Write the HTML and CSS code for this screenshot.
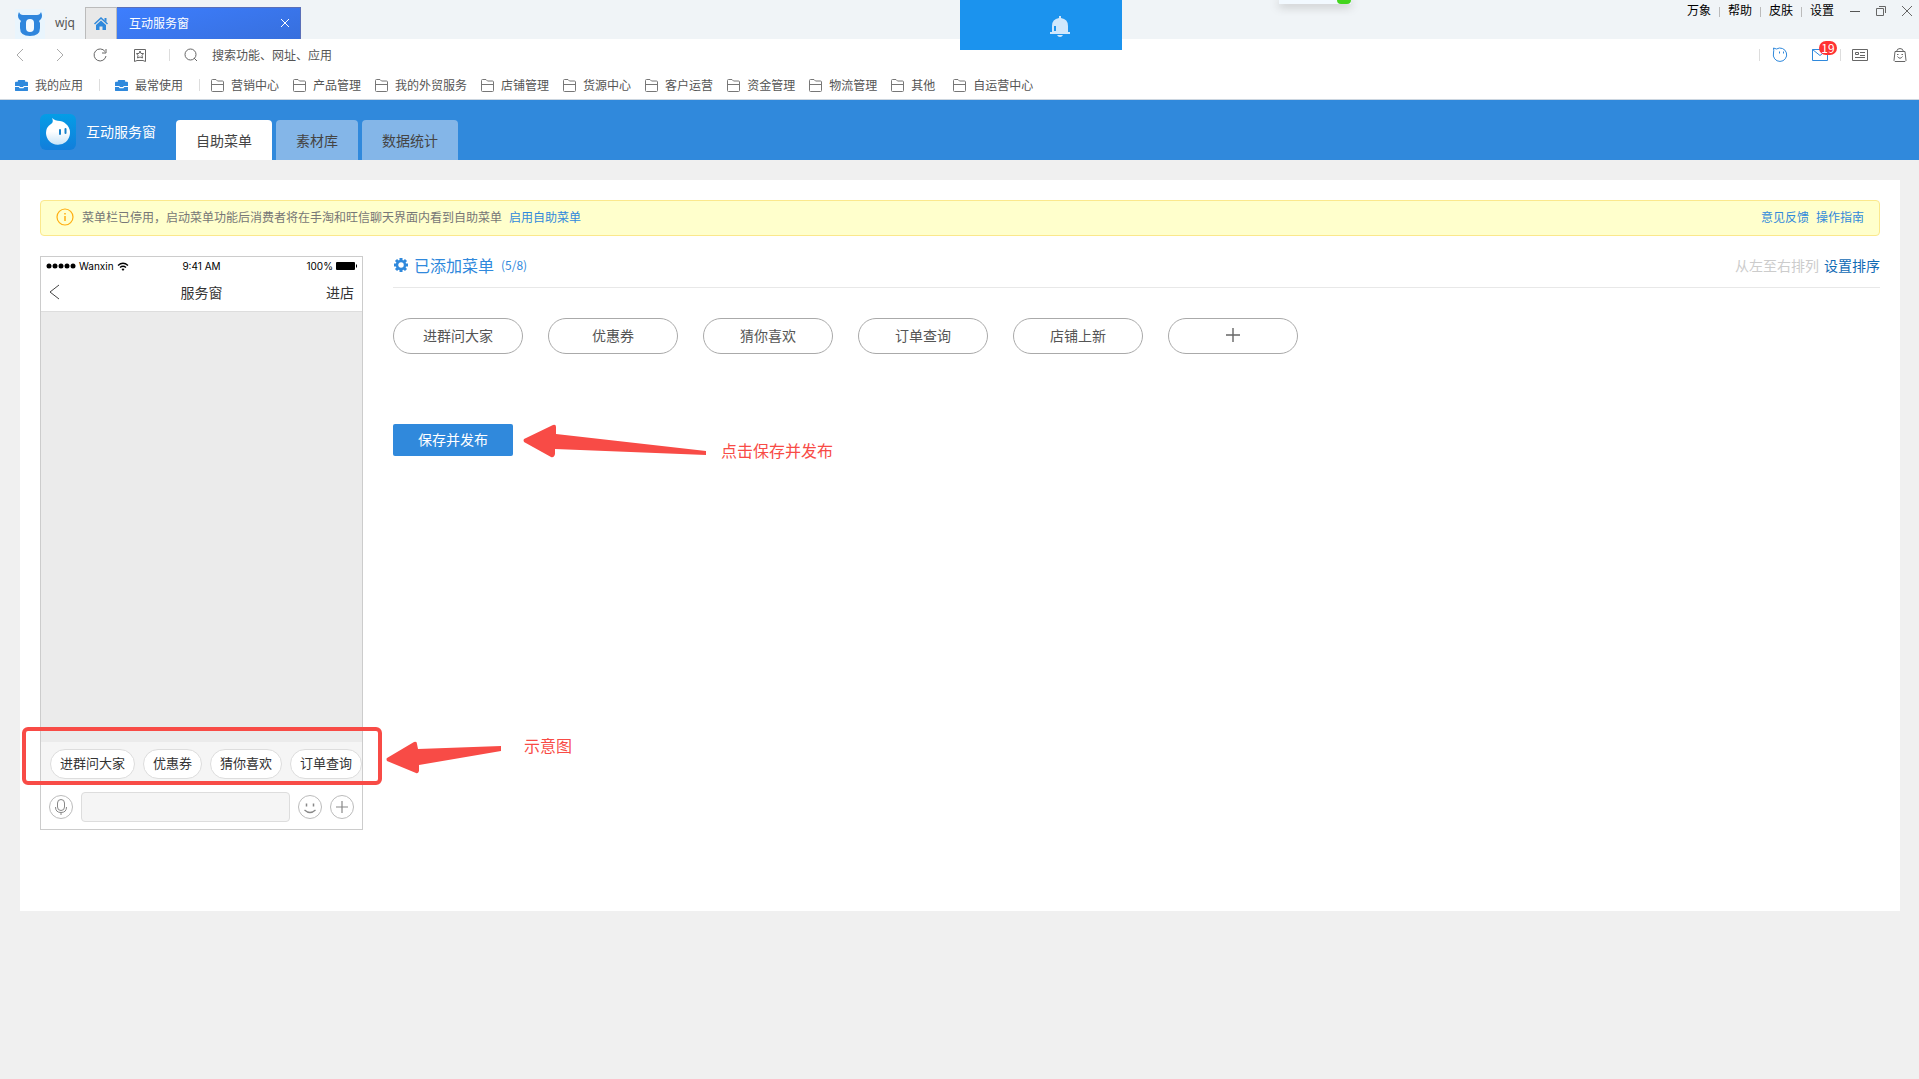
FILE: index.html
```html
<!DOCTYPE html>
<html lang="zh-CN">
<head>
<meta charset="utf-8">
<title>互动服务窗</title>
<link rel="stylesheet" href="styles.css">
</head>
<body>
<svg class="sprite" aria-hidden="true">
  <symbol id="folder" viewBox="0 0 13 13"><path d="M.5 11.500v-10q0-1 1-1H5l1.500 1.500h5q1 0 1 1v8.500q0 1-1 1h-10q-1 0-1-1zM.5 5.500h12" fill="none" stroke="#777"/></symbol>
  <symbol id="case" viewBox="0 0 14 14"><path d="M3 3V2q0-1 1-1h6q1 0 1 1v1h2q1 0 1 1v3.500H9.500L8.500 8.500h-3L4.500 7.500H0V4q0-1 1-1zM0 8.500h4L5 10h4l1-1.500h4V12q0 1-1 1H1q-1 0-1-1z" fill="#3089dc"/></symbol>
</svg>

<header class="titlebar">
  <svg class="app-logo" viewBox="0 0 30 30"><rect width="30" height="30" fill="#e9f5fd"/><path d="M4 3q1 3 4 3h14q3 0 4-3 2 4 0 7l-2 2 1 2v5q0 8-10 8T5 19v-5l1-2-2-2Q2 7 4 3z" fill="#2f86dd"/><rect x="11" y="10" width="8" height="13" rx="4" fill="#f4faff"/></svg>
  <span class="user">wjq</span>
  <button class="home-tab" aria-label="首页"><svg width="14" height="14" viewBox="0 0 14 14"><path d="M7 0l7 6.500-1 1L7 2 1 7.500l-1-1zM7 3.500l5 4.500V13H8.500V9.500h-3V13H2V8zM10.500 1h2v4l-2-2z" fill="#3089dc"/></svg></button>
  <div class="window-tab"><span>互动服务窗</span><button aria-label="关闭标签"><svg width="10" height="10" viewBox="0 0 10 10"><path d="M1 1l8 8M9 1L1 9" stroke="#fff" fill="none"/></svg></button></div>
  <nav class="system">
    <a href="#">万象</a><a href="#">帮助</a><a href="#">皮肤</a><a href="#">设置</a>
  </nav>
  <div class="window-controls">
    <button aria-label="最小化"><svg width="12" height="12" viewBox="0 0 12 12"><path d="M1 6.500h10" stroke="#555"/></svg></button>
    <button aria-label="还原"><svg width="12" height="12" viewBox="0 0 12 12"><path d="M1.500 3.500h7v7h-7zM4 1.500h6.500V8" fill="none" stroke="#666"/></svg></button>
    <button aria-label="关闭"><svg width="12" height="12" viewBox="0 0 12 12"><path d="M1 1l10 10M11 1L1 11" stroke="#666"/></svg></button>
  </div>
  <div class="notice" role="status"><svg width="20" height="22" viewBox="0 0 20 22"><path d="M9 2V0h2v2q7 1 7 8v6h2v2H0v-2h2v-6q0-7 7-8zM7 19h6q-1 2-3 2t-3-2z" fill="#d0e7fc"/><path d="M4 10h2v5H4z" fill="#1b93ee"/></svg></div>
  <div class="popup"><span></span></div>
</header>

<div class="toolbar">
  <button aria-label="后退"><svg width="14" height="14" viewBox="0 0 14 14"><path d="M10 1L4 7l6 6" fill="none" stroke="#aaa"/></svg></button>
  <button aria-label="前进"><svg width="14" height="14" viewBox="0 0 14 14"><path d="M4 1l6 6-6 6" fill="none" stroke="#aaa"/></svg></button>
  <button aria-label="刷新"><svg width="14" height="14" viewBox="0 0 14 14"><path d="M13 8a6 6 0 1 1-1-4.500M13 1v4H9" fill="none" stroke="#666"/></svg></button>
  <button aria-label="收藏"><svg width="14" height="14" viewBox="0 0 14 14"><path d="M1.500 1.500h11v12L10 12.500l-3 0-3 0-2.500 1zM7 3l1 2.500h2.500L9 7.500l.5 2.500L7 9l-2.500 1L5 7.500l-1.500-2H6z" fill="none" stroke="#666"/></svg></button>
  <form class="search">
    <svg width="14" height="14" viewBox="0 0 14 14"><circle cx="6.500" cy="6.500" r="5.500" fill="none" stroke="#666"/><path d="M10 10l3 3" stroke="#666"/></svg>
    <input type="search" aria-label="搜索" placeholder="搜索功能、网址、应用">
  </form>
  <div class="tray">
    <button aria-label="旺旺"><svg width="16" height="16" viewBox="0 0 16 16"><path d="M1.500 1l3 1A6.700 6.700 0 1 1 1.500 6Q2 3 1.500 1z" fill="none" stroke="#3089dc"/><path d="M7.500 4.500v2M11.500 4.500v2" stroke="#3089dc"/></svg></button>
    <button class="mail" aria-label="消息"><svg width="16" height="16" viewBox="0 0 16 16"><path d="M.5 2.500h15v11H.5zM.5 2.500L8 8.500l7.500-6" fill="none" stroke="#3089dc"/></svg><b>19</b></button>
    <button aria-label="名片"><svg width="16" height="16" viewBox="0 0 16 16"><path d="M.5 2.500h15v11H.5zM3.500 5.500h3v2h-3zM8 5.500h5M8 8.500h5M3 10.500h10" fill="none" stroke="#666"/></svg></button>
    <button aria-label="购物袋"><svg width="16" height="16" viewBox="0 0 16 16"><path d="M3 4.500h10l1 9-1 1H3l-1-1zM4.500 4.500Q5 1.500 8 1.500t3.500 3M5.500 9.500Q8 13 10.500 9.500" fill="none" stroke="#666"/><path d="M5 7h1.500v1H5zM9.500 7H11v1H9.500z" fill="#666"/></svg></button>
  </div>
</div>

<nav class="bookmarks">
  <a class="pinned" href="#"><svg><use href="#case"/></svg>我的应用</a>
  <a class="pinned" href="#"><svg><use href="#case"/></svg>最常使用</a>
  <a href="#"><svg><use href="#folder"/></svg>营销中心</a>
  <a href="#"><svg><use href="#folder"/></svg>产品管理</a>
  <a href="#"><svg><use href="#folder"/></svg>我的外贸服务</a>
  <a href="#"><svg><use href="#folder"/></svg>店铺管理</a>
  <a href="#"><svg><use href="#folder"/></svg>货源中心</a>
  <a href="#"><svg><use href="#folder"/></svg>客户运营</a>
  <a href="#"><svg><use href="#folder"/></svg>资金管理</a>
  <a href="#"><svg><use href="#folder"/></svg>物流管理</a>
  <a href="#"><svg><use href="#folder"/></svg>其他</a>
  <a href="#"><svg><use href="#folder"/></svg>自运营中心</a>
</nav>

<div class="banner">
  <svg class="brand-icon" viewBox="0 0 36 36"><defs><linearGradient id="tile" x2="0" y2="1"><stop stop-color="#049de6"/><stop offset="1" stop-color="#127edb"/></linearGradient><linearGradient id="drop" x2="0" y2="1"><stop offset=".5" stop-color="#fff"/><stop offset="1" stop-color="#c8e4f8"/></linearGradient></defs><rect width="36" height="36" rx="6" fill="url(#tile)"/><path d="M12 4q3 3 8 3a12 12 0 1 1-14 12q0-6 5-9 3-2 1-6z" fill="url(#drop)"/><path d="M20 16v4M25.500 15v4" stroke="#1681cb" stroke-width="2" stroke-linecap="round"/></svg>
  <h1>互动服务窗</h1>
  <nav class="tabs"><a class="active" href="#">自助菜单</a><a href="#">素材库</a><a href="#">数据统计</a></nav>
</div>

<main class="panel">
  <div class="alert">
    <svg width="18" height="18" viewBox="0 0 18 18"><circle cx="9" cy="9" r="8" fill="none" stroke="#ffae10" stroke-width="1.200"/><path d="M9 8v5M9 5v1.500" stroke="#ffae10" stroke-width="1.500"/></svg>
    <p>菜单栏已停用，启动菜单功能后消费者将在手淘和旺信聊天界面内看到自助菜单</p>
    <a href="#">启用自助菜单</a>
    <div class="alert-links"><a href="#">意见反馈</a><a href="#">操作指南</a></div>
  </div>

  <div class="columns">
    <section class="phone" aria-label="手机预览">
      <div class="status">
        <span class="carrier"><svg width="30" height="6" viewBox="0 0 30 6"><g fill="#000"><circle cx="3" cy="3" r="2.500"/><circle cx="9" cy="3" r="2.500"/><circle cx="15" cy="3" r="2.500"/><circle cx="21" cy="3" r="2.500"/><circle cx="27" cy="3" r="2.500"/></g></svg>Wanxin<svg width="12" height="9" viewBox="0 0 12 9"><path d="M1 3.500q5-4.500 10 0M3 5.500q3-2.500 6 0" fill="none" stroke="#000" stroke-width="1.400"/><path d="M4.500 7q1.500-1 3 0L6 9z"/></svg></span>
        <span>9:41 AM</span>
        <span class="battery">100%<svg width="21" height="8" viewBox="0 0 21 8"><rect width="19" height="8" rx="1"/><path d="M20 2.500v3h1v-3z"/></svg></span>
      </div>
      <div class="phone-nav"><svg width="12" height="16" viewBox="0 0 12 16"><path d="M10 1L1 8l9 7" fill="none" stroke="#444"/></svg><h2>服务窗</h2><span>进店</span></div>
      <div class="chat"></div>
      <div class="quick"><span>进群问大家</span><span>优惠券</span><span>猜你喜欢</span><span>订单查询</span></div>
      <div class="compose">
        <svg width="24" height="24" viewBox="0 0 24 24" fill="none" stroke="#888"><circle cx="12" cy="12" r="11.500" stroke="#bbb"/><rect x="8.500" y="4.500" width="7" height="11" rx="3.500"/><path d="M6.500 12q0 5.500 5.500 5.500t5.500-5.500M12 17.500V20"/></svg>
        <input type="text" aria-label="消息">
        <svg width="24" height="24" viewBox="0 0 24 24" fill="none" stroke="#888"><circle cx="12" cy="12" r="11.500" stroke="#bbb"/><path d="M8.500 8.500v3M15.500 8.500v3" stroke-width="1.500"/><path d="M6.500 15q5.500 5 11 0" stroke-width="1.300"/></svg>
        <svg width="24" height="24" viewBox="0 0 24 24" fill="none" stroke="#888"><circle cx="12" cy="12" r="11.500" stroke="#bbb"/><path d="M6 12h12M12 6v12" stroke-width="1.200"/></svg>
      </div>
      <div class="mark-box"></div>
      <div class="mark mark-preview"><svg width="116" height="34" viewBox="0 0 116 34"><path d="M1 18L28 2q3-1 3 2l1 5 83-3v5l-82 14v6q-1 3-3 2L1 21q-1-2 0-3z" fill="#f84b46"/></svg><span>示意图</span></div>
    </section>

    <section class="editor">
      <div class="editor-head">
        <svg width="16" height="16" viewBox="0 0 16 16"><path d="M8 1v14M1 8h14M3 3l10 10M13 3L3 13" stroke="#3089dc" stroke-width="3"/><circle cx="8" cy="8" r="4" fill="#fff" stroke="#3089dc" stroke-width="2.500"/></svg>
        <h2>已添加菜单</h2><small>(5/8)</small>
        <div class="order"><span>从左至右排列</span><a href="#">设置排序</a></div>
      </div>
      <div class="menu-items">
        <button>进群问大家</button><button>优惠券</button><button>猜你喜欢</button><button>订单查询</button><button>店铺上新</button>
        <button aria-label="添加菜单"><svg width="14" height="14" viewBox="0 0 14 14"><path d="M0 7h14M7 0v14" stroke="#666" stroke-width="1.400"/></svg></button>
      </div>
      <div class="publish"><button class="save">保存并发布</button>
        <div class="mark mark-save"><svg width="184" height="34" viewBox="0 0 184 34"><path d="M1 15L30 1q3-1 3 2v7l150 17v4L32 25v5q-1 4-4 3L1 18q-1-2 0-3z" fill="#f84b46"/></svg><span>点击保存并发布</span></div>
      </div>
    </section>
  </div>
</main>
</body>
</html>
```
FILE: styles.css
```css
* { box-sizing: border-box; }
body { margin: 0; background: #f0f0f0; color: #555; font: 12px/20px "Noto Sans CJK SC", sans-serif; }
h1, h2, p { margin: 0; font-weight: 400; }
a { color: inherit; text-decoration: none; }
button { padding: 0; border: 0; background: none; color: inherit; font: inherit; }
input { font: inherit; }
svg { display: block; flex: none; }
.sprite { position: absolute; width: 0; height: 0; }

.titlebar { position: relative; display: flex; height: 39px; padding-left: 15px; background: #f0f4f7; }
.app-logo { width: 30px; height: 30px; margin-top: 9px; }
.user { width: 40px; padding: 13px 0 0 10px; font-family: "Noto Sans", sans-serif; line-height: 20px; }
.home-tab { display: grid; place-items: center; width: 32px; height: 32px; margin-top: 7px; border: 1px solid #bbb; border-bottom: 0; background: #e8e8e8; }
.window-tab { display: flex; justify-content: space-between; align-items: center; width: 184px; margin-top: 7px; padding: 0 10px 2px 12px; border: 1px solid #5a6fb8; border-width: 1px 1px 0 0; background: linear-gradient(165deg, #3d7efe, #376fdd); color: #fff; }
.system { display: flex; align-items: flex-start; margin-left: auto; color: #000; }
.system a { position: relative; padding: 0 8px; line-height: 20px; }
.system a + a { border-left: 1px solid transparent; }
.system a + a::before { content: ""; position: absolute; left: -1px; top: 7px; width: 1px; height: 10px; background: #bbb; }
.window-controls { display: flex; align-items: flex-start; gap: 14px; padding: 5px 6px 0 7px; }
.notice { position: absolute; z-index: 2; left: 50%; top: 0; display: flex; justify-content: flex-end; width: 162px; height: 50px; padding: 16px 52px 0 0; background: #1b93ee; }
.popup { position: absolute; left: 1279px; top: 0; width: 72px; height: 4px; background: #f2f9ff; box-shadow: 0 2px 10px #aaa; }
.popup span { display: block; width: 14px; height: 4px; margin-left: auto; border-radius: 0 0 4px 4px; background: #43d51d; }

.toolbar { display: flex; align-items: center; gap: 26px; height: 32px; padding: 0 5px 0 13px; background: #fff; }
.search { display: flex; align-items: center; gap: 14px; height: 12px; margin-left: -4px; padding-left: 14px; border-left: 1px solid #ddd; }
.search input { width: 200px; height: 20px; padding: 0; border: 0; outline: 0; background: none; }
.search input::placeholder { color: #555; opacity: 1; }
.tray { display: flex; align-items: center; gap: 24px; height: 12px; margin-left: auto; padding: 0 6px 0 12px; border-left: 1px solid #ddd; }
.mail { position: relative; }
.mail::after { content: ""; position: absolute; left: 28px; top: 2px; width: 1px; height: 12px; background: #ddd; }
.mail b { position: absolute; left: 7px; top: -6px; width: 18px; height: 14px; border-radius: 7px; background: #f33; color: #fff; font-weight: 400; line-height: 13px; }

.bookmarks { display: flex; align-items: center; gap: 14px; height: 29px; padding-left: 15px; border-bottom: 1px solid #ccd6e0; background: #fff; }
.bookmarks a { display: flex; align-items: center; gap: 7px; min-width: 48px; }
.bookmarks svg { width: 13px; height: 13px; }
.bookmarks .pinned { padding-right: 17px; background: linear-gradient(#ddd, #ddd) right center / 1px 12px no-repeat; }
.bookmarks .pinned + a { margin-left: 1px; }
.bookmarks .pinned + a:not(.pinned) { margin-left: -3px; }

.banner { display: flex; align-items: flex-end; height: 60px; padding-left: 40px; background: #3089dc; }
.brand-icon { width: 36px; height: 36px; margin: 0 10px 10px 0; }
.banner h1 { width: 90px; margin-bottom: 19px; color: #fff; font-size: 14px; }
.tabs { display: flex; gap: 4px; }
.tabs a { height: 40px; padding: 0 20px; border-radius: 4px 4px 0 0; background: #84b6e8; color: #444; font-size: 14px; line-height: 40px; }
.tabs .active { background: #fff; }

.panel { min-height: 731px; margin: 20px 19px 20px 20px; padding: 20px 20px 80px; background: #fff; }
.alert { display: flex; align-items: center; height: 36px; padding: 0 15px 2px; border: 1px solid #fbe88c; border-radius: 4px; background: #ffc; color: #777; }
.alert svg { margin-right: 8px; }
.alert p { margin-right: 7px; }
.alert a { color: #3089dc; }
.alert-links { display: flex; gap: 7px; margin-left: auto; }
.columns { display: flex; align-items: flex-start; gap: 30px; margin-top: 20px; }

.phone { position: relative; flex: none; width: 323px; border: 1px solid #ccc; color: #333; }
.status { display: grid; grid-template-columns: 1fr auto 1fr; align-items: center; height: 18px; padding: 0 5px; color: #000; font: 10px/18px Inter, sans-serif; }
.carrier, .battery { display: flex; align-items: center; gap: 3px; }
.battery { justify-content: flex-end; }
.phone-nav { display: grid; grid-template-columns: 1fr auto 1fr; align-items: center; height: 37px; padding: 0 8px 2px; border-bottom: 1px solid #ddd; font-size: 14px; }
.phone-nav h2 { font-size: 14px; }
.phone-nav span { text-align: right; }
.chat { height: 430px; background: #ebebeb; }
.quick { display: flex; gap: 8px; height: 42px; padding: 7px 0 5px 9px; overflow: hidden; background: #f5f5f5; white-space: nowrap; }
.quick span { flex: none; padding: 0 9px; border: 1px solid #ddd; border-radius: 15px; background: #fff; font-size: 13px; line-height: 26px; }
.compose { display: flex; align-items: center; gap: 8px; height: 45px; padding: 0 8px; border-top: 1px solid #ddd; }
.compose input { flex: 1; min-width: 0; height: 30px; border: 1px solid #ddd; border-radius: 4px; background: #f5f5f5; }

.editor { flex: 1; min-width: 0; }
.editor-head { display: flex; align-items: center; height: 32px; padding-bottom: 14px; border-bottom: 1px solid #e8e8e8; color: #3089dc; }
.editor-head h2 { margin: 0 7px 0 5px; font-size: 16px; }
.editor-head small { font-size: 12px; }
.order { display: flex; gap: 5px; margin-left: auto; color: #ccc; font-size: 14px; }
.order a { color: #106bb5; }
.menu-items { display: flex; flex-wrap: wrap; gap: 25px; margin-top: 30px; }
.menu-items button { display: grid; place-items: center; width: 130px; height: 36px; padding-bottom: 2px; border: 1px solid #aaa; border-radius: 18px; font-size: 14px; }
.publish { position: relative; margin-top: 70px; }
.save { width: 120px; height: 32px; padding-bottom: 2px; border-radius: 2px; background: #3089dc; color: #fff; font-size: 14px; }

.mark-box { position: absolute; left: -19px; top: 470px; width: 360px; height: 58px; border: 4px solid #f84b46; border-radius: 6px; }
.mark { position: absolute; display: flex; align-items: center; color: #f84b46; font-size: 16px; white-space: nowrap; }
.mark-save { left: 130px; top: -2px; gap: 14px; }
.mark-save span { padding-top: 18px; }
.mark-preview { left: 345px; top: 478px; gap: 22px; }
.mark-preview span { padding-bottom: 24px; }
```
